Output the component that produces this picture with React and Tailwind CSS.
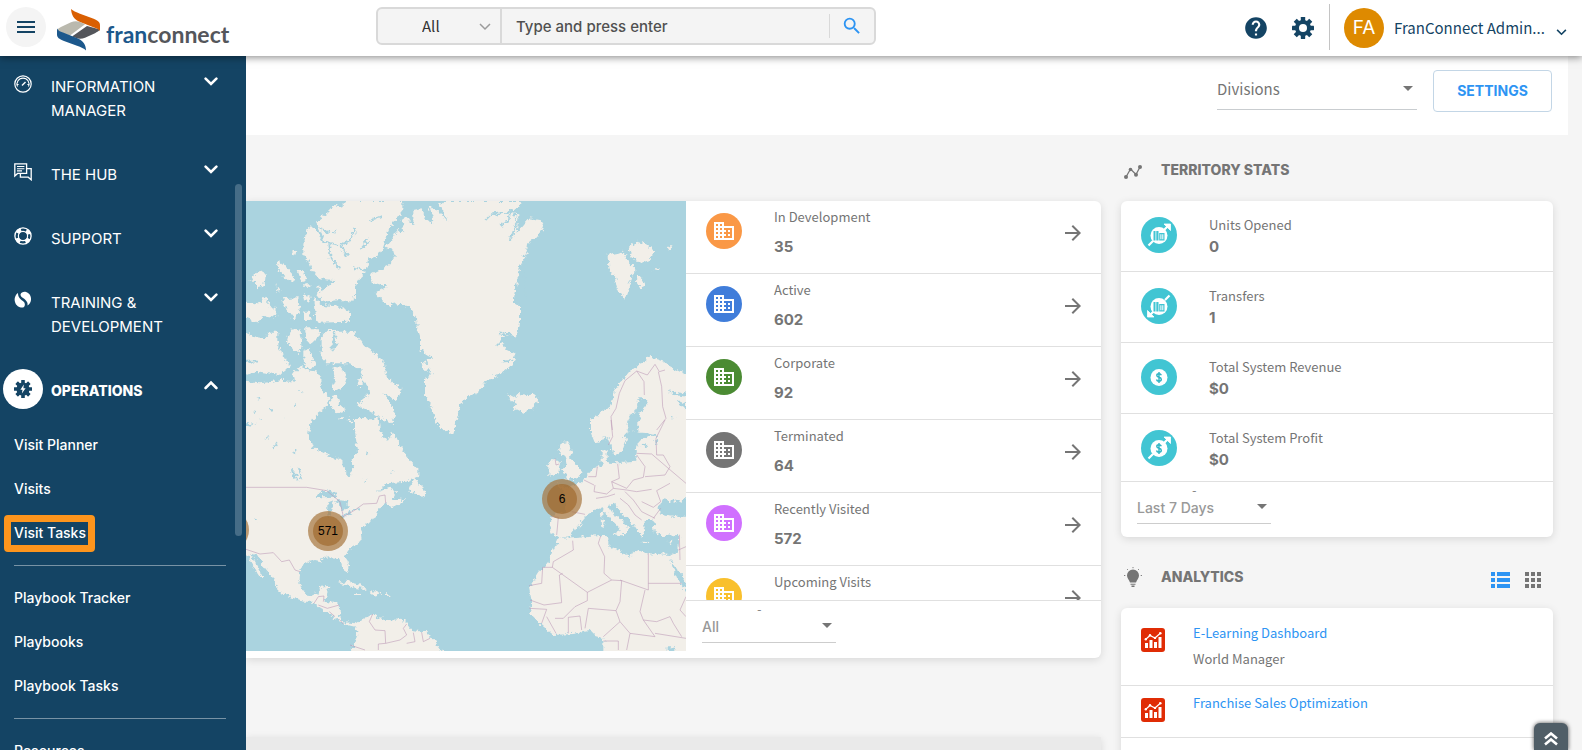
import { MdArrowForward, MdBusiness, MdHelp, MdSearch } from "react-icons/md";

const menuItems = [
  { icon: GaugeIcon, label: "INFORMATION MANAGER" },
  { icon: HubIcon, label: "THE HUB" },
  { icon: SupportIcon, label: "SUPPORT" },
  { icon: TrainingIcon, label: "TRAINING & DEVELOPMENT" },
];

const operationGroups = [
  ["Visit Planner", "Visits", "Visit Tasks"],
  ["Playbook Tracker", "Playbooks", "Playbook Tasks"],
  ["Resources"],
];

const locations = [
  { label: "In Development", value: "35", color: "bg-[#fa9846]" },
  { label: "Active", value: "602", color: "bg-[#407dda]" },
  { label: "Corporate", value: "92", color: "bg-[#4b8b33]" },
  { label: "Terminated", value: "64", color: "bg-[#757575]" },
  { label: "Recently Visited", value: "572", color: "bg-[#d070ff]" },
  { label: "Upcoming Visits", value: null, color: "bg-[#f9c02d]" },
];

const stats = [
  { label: "Units Opened", value: "0", glyph: "building", arrow: "up" },
  { label: "Transfers", value: "1", glyph: "building", arrow: "down" },
  { label: "Total System Revenue", value: "$0", glyph: "dollar", arrow: null },
  { label: "Total System Profit", value: "$0", glyph: "dollar", arrow: "up" },
];

/* ---------- icons ---------- */

function GaugeIcon() {
  return (
    <svg viewBox="0 0 18 18" className="h-[18px] w-[18px]" fill="none" stroke="currentColor">
      <circle cx="9" cy="9" r="8.2" strokeWidth="1.2" />
      <path d="M3.5 11.5A6 6 0 1 1 14.5 11.5M2.6 9.5h2M13.4 9.5h2" strokeWidth="1.1" />
      <path d="M8 10.5 11.5 7" strokeWidth="1.4" />
    </svg>
  );
}

function HubIcon() {
  return (
    <svg viewBox="0 0 18 18" className="h-[18px] w-[18px]" fill="none" stroke="currentColor" strokeWidth="1.3">
      <path d="M.8.8h11.8v9.6H3.6L.8 13z" />
      <path d="M3 3.5h7.4M3 5.7h7.4M3 7.9h5" strokeWidth="1.1" />
      <path d="M12.6 5.6h4.6v11.2l-3-2.6H6.4v-3.8" />
    </svg>
  );
}

function SupportIcon() {
  return (
    <svg viewBox="0 0 18 18" className="h-[18px] w-[18px]" fill="none" stroke="currentColor">
      <circle cx="9" cy="9" r="8.1" strokeWidth="1.3" />
      <circle cx="9" cy="9" r="4.6" strokeWidth="1.2" />
      <circle cx="9" cy="9" r="6.4" strokeWidth="4" strokeDasharray="4.6 5.453" strokeDashoffset="-2.7" />
    </svg>
  );
}

function TrainingIcon() {
  return (
    <svg viewBox="0 0 18 18" className="h-[18px] w-[18px]" fill="currentColor">
      <path d="M4 2C1 4 0 8 1 11c1 4 5 6 8 5.500 2-.5 2.500-3.500 1-5.500C8.500 9.500 7 9 5.500 7 4.300 5.200 4 4 4 2z" />
      <path d="M6.500 3.500C7 1.500 9.500.500 12 1c3.500 1 5.500 4.500 5 8-.3 2.500-1.500 4.500-3.500 5.500.5-2.500-.5-4-2.500-6s-4.500-2.500-4.500-5z" />
    </svg>
  );
}

function Gear({ className, children }) {
  return (
    <svg viewBox="0 0 22 22" className={className} fill="currentColor">
      {[0, 45, 90, 135].map((angle) => (
        <rect key={angle} x="8.800" y="0" width="4.400" height="22" rx=".4" transform={`rotate(${angle} 11 11)`} />
      ))}
      <circle cx="11" cy="11" r="8" />
      {children}
    </svg>
  );
}

function Chevron({ className, up }) {
  return (
    <svg viewBox="0 0 14 12" className={className} fill="none" stroke="currentColor" strokeWidth="2.600" strokeLinecap="round">
      <path d={up ? "M1.600 9 7 3.600 12.400 9" : "M1.600 3.600 7 9l5.400-5.400"} />
    </svg>
  );
}

function Caret() {
  return (
    <svg viewBox="0 0 10 5" className="pointer-events-none absolute top-1/2 right-1 h-[5px] w-[10px] -translate-y-1" fill="#757575">
      <path d="M0 0h10L5 5z" />
    </svg>
  );
}

function Logo() {
  return (
    <a href="#home" aria-label="franconnect" className="ml-[11px] flex items-center">
      <svg viewBox="0 0 43 42" className="h-[42px] w-[43px]">
        <path d="M0 21c1-1.500 3-2.500 6-4l8-3.700c3-1.400 6-1.500 9-.3l5 2.200L13 26.500c-2 .5-4 0-6-1z" fill="#bab9ae" />
        <path d="M43 20.500c-1 1.500-3 2.500-5 3.700L28 28.800c-3 1.300-6 1.400-9 .3l-4-1.700L30 17z" fill="#54565b" />
        <path d="M14 0c2 2 5 3.200 9 4.700L36 9.500c5 2 7 3.500 7 6.500v6c-1-1.500-3-2.500-6-3.500L22 12.500C16.500 10 14.500 5.500 14 0z" fill="#d95f02" />
        <path d="M29 41.500c-2-2-5-3.200-9-4.700L7 32c-5-2-7-3.500-7-6.500v-6c1 2 3 3 6 4l15 6c5.500 2.500 8 6.500 8 12z" fill="#1c588c" />
      </svg>
      <span className="mt-2 ml-[6px] font-['Lato',sans-serif] text-[23px] leading-8 font-bold text-[#54565b]">
        <span className="text-[#1c588c]">fran</span>connect
      </span>
    </a>
  );
}

function StatIcon({ glyph, arrow }) {
  return (
    <svg viewBox="0 0 36 36" className="h-9 w-9 shrink-0">
      <circle cx="18" cy="18" r="18" fill="#41c5d3" />
      {arrow && (
        <g transform={arrow === "down" ? "rotate(180 18 18)" : undefined} stroke="#fff" fill="none">
          <path d="M7.500 28.500 12 24M22 14l6-6" strokeWidth="2.200" />
          <path d="M23 7h6.500v6.500z" fill="#fff" strokeWidth=".8" />
        </g>
      )}
      <circle cx="18" cy="18.500" r="8.500" fill="#fff" />
      {glyph === "dollar" ? (
        <path d="M20.300 16.200c-.4-1.100-1.300-1.500-2.300-1.500-1.300 0-2.200.7-2.200 1.700 0 2.500 4.500 1.200 4.500 3.900 0 1.200-1 1.900-2.300 1.900-1.200 0-2.200-.6-2.500-1.700M18 13v11" fill="none" stroke="#2cb4c4" strokeWidth="1.400" />
      ) : (
        <g fill="#41c5d3">
          <path d="M12.500 14h2v9.500h-2zM15.300 14h2.200v9.500h-2.200z" />
          <path d="M18.200 16h5.300v7.500h-5.300zM19.400 17.300v4.900h1v-4.900zm1.900 0v4.900h1v-4.900z" fillRule="evenodd" />
        </g>
      )}
    </svg>
  );
}

function ReportIcon() {
  return (
    <svg viewBox="0 0 24 24" className="h-6 w-6 shrink-0">
      <rect width="24" height="24" rx="3" fill="#e02c05" />
      <path d="M4 15h3v5H4zM8.500 12h3v8h-3zM13 14h3v6h-3zM17.500 9h3v11h-3z" fill="#fff" />
      <path d="m4.500 11.500 4.500-4 5 2.500 5.300-4.700" fill="none" stroke="#fff" strokeWidth="1.200" />
      <g fill="#fff">
        <circle cx="4.800" cy="11.200" r="1.200" />
        <circle cx="9" cy="7.300" r="1.200" />
        <circle cx="14" cy="9.900" r="1.200" />
        <circle cx="19.300" cy="5.300" r="1.300" />
      </g>
    </svg>
  );
}

/* ---------- map ---------- */

const northLand = [
  "M320 33H490V60L455 105 440 140 430 170 410 200 385 205 375 250 355 270 345 290 345 320 335 335 300 330 250 335 230 310 265 290 280 270 235 265 215 240 205 215 190 195 190 160 200 120 215 110 235 130 255 160 245 130 228 95 260 70 285 45 305 50z",
  "M220 325 245 345 300 350 330 365 330 395 235 398 225 380z",
  "M245 440 265 420 285 420 275 450 275 490 290 470 285 425 340 425 360 450 375 470 400 490 430 510 435 540 440 560 485 600 470 635 450 620 430 610 465 660 455 700 420 680 385 660 350 645 380 620 390 600 370 570 360 540 330 520 290 520 260 520 245 500z",
  "M140 455 150 420 180 415 188 470 175 490 160 480z",
  "M195 415 240 415 235 440 215 460 200 455z",
  "M190 480 210 475 225 530 200 535 190 510z",
  "M110 215 130 220 145 240 165 260 155 278 135 260 115 240z",
  "M172 240 195 245 200 270 185 275z",
  "M190 283H214V293H190z",
  "M232 290 245 290 243 303 234 303z",
  "M157 178 168 184 167 194 158 190z",
  "M108 282 122 300 116 306z",
  "M45 250 75 243 70 290 50 295 45 275 30 275z",
  "M10 330 50 345 75 320 90 350 110 355 108 380 80 375 45 400 10 375z",
  "M125 325 175 322 180 370 160 385 135 350z",
  "M185 312 215 320 210 335 190 330z",
  "M190 365 210 365 212 390 195 390z",
  "M10 425 45 440 75 445 85 425 115 425 115 470 150 530 120 555 60 545 10 555z",
  "M10 575 60 580 130 570 165 575 160 550 180 530 200 540 235 545 245 570 240 590 265 620 260 650 235 670 215 690 205 725 10 725z",
  "M280 530 310 535 318 570 310 590 290 600 275 600 285 570z",
  "M270 620 290 615 300 645 320 660 290 670 272 650z",
  "M295 682H312V690H297zM328 680 334 696 326 698z",
  "M352 568 368 566 368 588 355 588z",
  "M345 685 375 685 400 695 415 725 345 725z",
  "M665 33H840L835 50 800 65 835 70 835 85 830 130 870 85 900 90 912 110 890 140 865 160 860 190 840 230 830 280 822 320 822 340 840 350 840 400 830 440 800 430 780 450 800 480 822 490 828 515 790 545 740 572 715 605 670 628 655 665 650 690 637 732 610 720 590 695 570 645 555 610 555 565 575 555 560 510 580 505 540 480 540 440 530 410 528 380 510 355 480 338 440 348 405 310 440 290 395 275 390 255 450 225 465 200 460 180 437 170 460 140 475 120 490 130 485 90 500 80 520 105 520 60 545 55 555 85 575 100 580 90 565 50 600 65 625 95 600 45 610 33z",
  "M544 515 565 520 568 538 550 540z",
  "M805 610 825 625 835 612 870 615 885 608 895 635 880 655 850 668 820 655 830 640 810 630z",
  "M1103 195 1150 185 1165 215 1190 240 1175 255 1165 300 1155 328 1130 295 1125 260 1105 235z",
  "M1165 175 1190 155 1225 165 1243 185 1230 210 1205 218 1175 200z",
  "M1190 250 1215 280 1205 300 1188 275z",
  "M1280 175 1293 168 1296 175 1285 180zM1237 240 1262 234 1260 240z",
  "M1053 725 1053 690 1080 670 1110 650 1130 590 1150 570 1175 540 1210 515 1230 500 1275 515 1290 530 1350 560V725z",
];

const northWater = [
  "M1160 725 1165 690 1190 655 1195 625 1225 625 1220 645 1200 670 1195 725z",
  "M1280 598 1300 605 1350 612 1350 622 1305 615z",
  "M1308 628 1335 640 1335 655 1320 648z",
  "M1295 680 1315 690 1312 710 1300 700z",
  "M50 622 62 626 56 632zM85 655 96 658 92 666zM128 690 140 684 138 694zM180 600 190 604 184 610zM40 660 50 668 42 672zM162 640 172 648 164 652z",
];

const northInlets = [
  "M235 128 250 155 300 165 330 152 352 108",
  "M268 165 272 205 298 238M300 165 322 200M245 122 290 128",
  "M388 93 424 78M360 180 385 150M340 232 375 240",
  "M735 92 755 72 810 68 805 95 780 106M825 70 830 100 812 150",
  "M850 195 858 230 850 290 858 320",
  "M770 470 800 440M785 515 820 512M780 430 815 440",
  "M18 515 55 515M30 572 80 575 135 562M20 710 65 682",
];

const southLand = [
  "M0-5H205V40L220 85 250 100 290 115 310 120 312 150 330 170 340 140 335 115 355 100 350 70 345 30 345-5H415L420 30 440 65 458 35 480 80 505 115 535 150 535 170 500 185 440 190 415 215 450 203 468 210 455 240 495 235 480 250 450 265 440 250 415 265 410 290 385 305 370 320 360 340 362 365 330 385 315 405 325 435 325 460 310 450 300 415 270 412 240 415 250 425 225 420 190 430 180 455 178 490 200 525 235 520 240 500 268 497 260 525 250 545 295 550 300 560 297 590 310 607 350 610 365 600 400 580 410 595 490 600 515 630 560 637 585 665 600 690 640 710H320L345 680 352 640 345 620 310 612 285 595 250 570 220 545 190 545 150 530 115 510 105 485 70 440 50 405 30 400 50 435 75 480 55 465 30 420 18 405 0 400z",
  "M505 215 525 170 535 190 560 215 555 230 530 222z",
  "M290 490 320 482 350 490 378 507 350 505 320 495z",
  "M385 515 408 514 425 521 400 528z",
  "M345 523H360V528H345zM438 523H451V528H438z",
  "M585-5H652L640 40 620 35 600 20z",
  "M962 70 990 65 985 80 995 95 990 115 1010 135 1025 155 1015 175 965 180 985 165 965 150 980 135 975 110 955 100z",
  "M925 130 945 115 960 125 955 160 925 168z",
  "M1053-5 1053 40 1065 70 1085 65 1100 45 1115 80 1120 105 1145 100 1158 60 1150 30 1160-5z",
  "M1195-5V30L1240 42 1205 60 1192 75 1190 95 1185 125 1130 130 1110 128 1100 115 1100 85 1085 92 1085 125 1090 135 1060 145 1035 175 1010 195 985 205 950 190 975 220 975 275 935 285 930 340 955 347 955 360 935 400 925 430 895 455 867 500 875 540 870 580 905 615 940 645 1000 642 1050 632 1065 648 1090 655 1090 705H1350V-5z",
];

const southWater = [
  "M958 353 990 347 1010 320 1040 285 1065 270 1085 262 1095 275 1115 300 1140 325 1135 345 1155 345 1165 320 1125 285 1105 255 1125 250 1140 275 1170 300 1190 330 1205 350 1215 330 1210 300 1240 300 1245 340 1270 348 1318 345 1310 400 1290 405 1225 400 1185 390 1170 410 1145 395 1105 380 1105 350 1080 345 1000 352z",
  "M1255 265 1270 235 1305 245 1350 230V290L1300 290 1262 285z",
  "M1290 415 1350 505V530L1308 470z",
  "M225 230 250 210 285 216 290 230 245 232z",
  "M262 290 262 250 280 243 275 290z",
  "M285 240 325 243 322 260 308 278 300 255z",
  "M300 291 330 275 334 280 305 295zM335 270 360 264 358 270 338 274z",
  "M150 142 165 160 178 185 160 170zM170 138 180 150 188 182 176 165z",
  "M70 55 90 48 85 56zM95 78 110 70 104 82zM10 15 50 8 30 20z",
  "M160 95 170 90 168 100zM380 95 388 102 380 106zM455 150 464 154 456 158zM370 180 380 176 376 186zM46 294 54 298 48 304z",
  "M1195 42 1250 44 1250 50 1200 52z",
  "M1210 68 1222 75 1218 85 1205 78zM1245 55 1255 65 1248 75z",
  "M1280 682H1303V693H1280z",
];

const southIslands = [
  "M1082 278 1090 276 1090 292 1084 292zM1082 298 1094 297 1092 320 1084 318z",
  "M1118 338 1148 336 1146 346 1128 344zM1205 365 1228 366 1226 370 1206 369z",
  "M1282 366 1298 362 1292 370zM1010 318 1025 312 1022 319z",
];

const borders = [
  "M18 202H200L260 212 300 245 310 290 345 270 370 252 410 250 418 228 435 225 437 250",
  "M18 388 60 402 100 398 125 425 148 420 165 450 180 455",
  "M222 550 235 530 252 528 250 545M235 555 262 565 298 555M268 575 285 590M298 598 310 612",
  "M398 582 388 605 405 630 435 632 437 670 415 672 415 690M437 670 480 660 500 645 490 625 500 612M520 638 525 665 500 670M545 637 550 665 570 655M330 675 375 690",
  "M945 115 948 135 957 132M935 290 955 292 950 345M995 275 1035 283",
  "M1032 180 1062 195M1045 170 1068 170 1072 140M1065 195 1062 215 1100 222 1120 205 1115 185 1138 175 1133 132M1068 235 1100 230 1125 222M1115 185 1160 205 1180 180 1210 172M1210 172 1215 140 1190 105M1120 205 1160 210 1190 215 1235 208M1140 235 1165 255 1185 285 1205 300M1155 215 1180 240 1205 275 1245 295M1205 245 1240 262 1262 245 1250 212 1290 190M1190 100 1235 102 1285 145 1338 190M1215 170 1275 165 1290 140 1270 105 1250 105 1248 55 1275 0M1113 0 1118 50 1105 75M1262 265 1240 295M1318 345 1320 420M1338 380 1315 390",
  "M998 362 1000 390 940 425 937 442 1042 517 1115 480 1092 460 1094 410 1075 370 1082 348M937 442H908L905 490 867 497M968 460 958 465 965 548 912 555 870 540M1225 400V490H1325M1225 490V510L1140 480M1115 480 1145 482 1140 545 1128 572 1045 565 1035 625M1042 517V542L1005 560 970 595 945 595M1215 510 1200 575 1210 600 1250 605 1290 590 1300 610M868 565 920 568 905 610M920 590 948 640M985 640V592L1020 588 1025 630M1128 572 1140 605 1090 650M1140 605 1170 640 1245 650 1210 600M1090 663H1135V690M1170 640 1160 690M1245 640 1338 655M1300 610 1325 650M1338 530 1320 570 1338 590",
];

function WorldMap() {
  return (
    <svg viewBox="0 0 1320 1350" preserveAspectRatio="xMinYMin slice" className="h-full w-full bg-[#aad3df]" role="img" aria-label="Map of locations">
      <defs>
        {/* roughens the coastlines */}
        <filter id="coast" x="0" y="0" width="100%" height="100%">
          <feTurbulence type="fractalNoise" baseFrequency="0.08" numOctaves="3" seed="4" result="noise" />
          <feDisplacementMap in="SourceGraphic" in2="noise" scale="21" xChannelSelector="R" yChannelSelector="G" />
        </filter>
      </defs>
      <g filter="url(#coast)">
        <rect x="-40" y="-40" width="1400" height="1430" fill="#aad3df" />
        <g transform="translate(-18 -33)">
          <path d={northLand.join("")} fill="#f2efe9" />
          <path d={northWater.join("")} fill="#aad3df" />
          <path d={northInlets.join("")} fill="none" stroke="#aad3df" strokeWidth="5" />
        </g>
        <g transform="translate(-18 657)">
          <path d={southLand.join("")} fill="#f2efe9" />
          <path d={southWater.join("")} fill="#aad3df" />
          <path d={southIslands.join("")} fill="#f2efe9" />
        </g>
      </g>
      <g fill="none" stroke="#b893b4" strokeOpacity=".65" strokeWidth="2.500">
        <path d="M1117 720 1113 680 1128 655 1138 610 1155 572 1190 543 1222 555 1245 523 1258 545 1275 540M1190 543 1212 575 1213 615M1255 545 1265 590 1268 650 1278 685 1250 720" transform="translate(-18 -33)" />
        <path d={borders.join("")} transform="translate(-18 657)" />
      </g>
    </svg>
  );
}

function Cluster({ count, className }) {
  return (
    <button className={`absolute flex h-10 w-10 items-center justify-center rounded-full bg-[#a8773fb5] ${className}`}>
      <span className="flex h-[30px] w-[30px] items-center justify-center rounded-full bg-[#a06a2fb0] font-['Liberation_Sans',sans-serif] text-xs text-black">
        {count}
      </span>
    </button>
  );
}

/* ---------- layout ---------- */

function Header() {
  return (
    <header className="relative z-30 flex h-14 shrink-0 items-center bg-white shadow-[0_1px_8px_rgba(0,0,0,0.5)]">
      <button aria-label="Menu" className="mb-[2px] ml-[6px] flex h-10 w-10 shrink-0 flex-col items-center justify-center gap-[3px] rounded-full bg-[#f4f4f4]">
        <span className="h-[2px] w-[18px] bg-[#144464]" />
        <span className="h-[2px] w-[18px] bg-[#144464]" />
        <span className="h-[2px] w-[18px] bg-[#144464]" />
      </button>
      <div className="w-[330px] shrink-0 pt-1">
        <Logo />
      </div>
      <form className="mb-1 flex h-[38px] w-[500px] items-center rounded-md border-2 border-[#d9d9d9] bg-[#f4f4f4] font-['Noto_Sans_CJK_SC',sans-serif]">
        <div className="relative h-full w-[124px] border-r-2 border-[#d9d9d9]">
          <select aria-label="Search in" className="h-full w-full appearance-none bg-transparent pl-11 text-[15px] text-[#333]">
            <option>All</option>
          </select>
          <svg viewBox="0 0 12 8" className="pointer-events-none absolute top-[14px] right-[9px] h-2 w-3" fill="none" stroke="#9b9b9b" strokeWidth="1.500">
            <path d="m1 1 5 5 5-5" />
          </svg>
        </div>
        <input
          type="text"
          aria-label="Search"
          placeholder="Type and press enter"
          className="h-full min-w-0 flex-1 bg-transparent pl-[14px] font-['Inter',sans-serif] text-[15px] font-medium placeholder:text-[#505050]"
        />
        <button type="button" aria-label="Run search" className="flex h-6 w-[45px] items-center justify-center border-l border-[#d9d9d9]">
          <MdSearch className="h-[22px] w-[22px] text-[#2d94f3]" />
        </button>
      </form>
      <div className="ml-auto flex h-full items-center text-[#144464]">
        <button aria-label="Help" className="mr-[23px]">
          <MdHelp className="h-[26px] w-[26px]" />
        </button>
        <button aria-label="Settings" className="mr-[15px]">
          <Gear className="h-[22px] w-[22px]">
            <circle cx="11" cy="11" r="4" fill="#fff" />
          </Gear>
        </button>
        <span className="mr-[14px] mb-[2px] h-[46px] w-px bg-[#c4c4c4]" />
        <button className="flex items-center pr-[15px]">
          <span className="mr-[10px] flex h-10 w-10 items-center justify-center rounded-full bg-[#de8a00] font-['Inter',sans-serif] text-[19px] text-white">
            FA
          </span>
          <span className="mr-[10px] w-[152px] text-left font-['Noto_Sans_CJK_SC',sans-serif] text-[15px] whitespace-nowrap">
            FranConnect Admin...
          </span>
          <svg viewBox="0 0 12 8" className="mt-2 h-[7px] w-[11px]" fill="none" stroke="currentColor" strokeWidth="1.800">
            <path d="m1 1 5 5 5-5" />
          </svg>
        </button>
      </div>
    </header>
  );
}

function Sidebar() {
  return (
    <aside className="relative w-[246px] shrink-0 overflow-hidden bg-[#144464] font-['Inter',sans-serif] text-[15px] text-white">
      <nav className="flex flex-col gap-10 pt-[19px]">
        {menuItems.map((item) => (
          <button key={item.label} className="flex items-start pr-7 pl-[14px] text-left leading-6">
            <item.icon />
            <span className="ml-[19px] w-[120px]">{item.label}</span>
            <Chevron className="ml-auto h-3 w-[14px]" />
          </button>
        ))}
        <div>
          <button className="flex h-6 w-full items-start pr-7 pl-[3px] text-left">
            <span className="-my-[10px] flex h-10 w-10 items-center justify-center rounded-full bg-white text-[#144464]">
              <Gear className="h-[18px] w-[18px]">
                <path d="M12 5.500 7.800 12h2.600l-.8 4.500 4.600-6.500h-2.700z" fill="#fff" />
              </Gear>
            </span>
            <span className="ml-2 text-sm/6 font-extrabold">OPERATIONS</span>
            <Chevron up className="ml-auto h-3 w-[14px]" />
          </button>
          <div className="mt-5 pr-5 pl-[14px] text-sm font-medium">
            {operationGroups.map((group, i) => (
              <div key={i} className={i > 0 ? "mt-[10px] border-t border-[#7893a5] pt-[10px]" : ""}>
                {group.map((label) => (
                  <a key={label} href="#operations" className="relative flex h-11 items-center">
                    {label}
                    {label === "Visit Tasks" && (
                      <span className="absolute top-1 -left-[10px] h-[37px] w-[91px] rounded-sm border-[7px] border-[#fd951d]" />
                    )}
                  </a>
                ))}
              </div>
            ))}
          </div>
        </div>
      </nav>
      <span className="absolute top-32 right-1 h-[352px] w-[7px] rounded-full bg-[#466d87]" />
    </aside>
  );
}

function Toolbar() {
  return (
    <div className="mr-[14px] flex h-[79px] items-start justify-end gap-4 bg-white pt-[14px] pr-4">
      <div className="relative w-[200px] border-b border-[#c9cdd0]">
        <select aria-label="Divisions" className="h-[39px] w-full appearance-none bg-transparent font-['Noto_Sans_CJK_SC',sans-serif] text-[15px] text-[#757575]">
          <option>Divisions</option>
        </select>
        <Caret />
      </div>
      <button className="h-[42px] w-[119px] rounded border border-[#c3d6e6] font-['Inter',sans-serif] text-sm font-bold text-[#2d94f3]">
        SETTINGS
      </button>
    </div>
  );
}

function FooterSelect({ label, value }) {
  return (
    <div className="relative ml-4 w-[134px] border-b border-[#cdcdcd]">
      <span className="absolute -top-2 left-[55px] text-[10px] leading-3 text-[#757575]">-</span>
      <select aria-label={label} className="h-[30px] w-full appearance-none bg-transparent font-['Inter',sans-serif] text-sm font-medium text-[#999]">
        <option>{value}</option>
      </select>
      <Caret />
    </div>
  );
}

function LocationsCard() {
  return (
    <section className="flex h-[457px] rounded-r-md bg-white shadow-[0_2px_8px_rgba(0,0,0,0.12)]">
      <div className="relative h-[450px] min-w-0 flex-1 overflow-hidden">
        <WorldMap />
        <Cluster count="" className="top-[309px] -left-[37px]" />
        <Cluster count="571" className="top-[310px] left-[62px]" />
        <Cluster count="6" className="top-[278px] left-[296px]" />
      </div>
      <div className="flex w-[415px] shrink-0 flex-col">
        <ul className="h-[399px] overflow-hidden">
          {locations.map((item) => (
            <li key={item.label} className="flex h-[73px] items-start border-b border-[#e0e0e0] pr-4 pl-5">
              <span className={`mt-3 flex h-9 w-9 items-center justify-center rounded-full ${item.color}`}>
                <MdBusiness className="h-6 w-6 text-white" />
              </span>
              <span className="ml-8 pt-[6px] text-[#757575]">
                <span className="block font-['Noto_Sans_CJK_SC',sans-serif] text-[13px] leading-5">{item.label}</span>
                <span className="mt-[10px] block text-[15px] leading-5 font-bold">{item.value}</span>
              </span>
              <button aria-label={`Open ${item.label}`} className="mt-5 ml-auto">
                <MdArrowForward className="h-6 w-6 text-[#757575]" />
              </button>
            </li>
          ))}
        </ul>
        <div className="flex-1 border-t border-[#e0e0e0] pt-[11px]">
          <FooterSelect label="Location type" value="All" />
        </div>
      </div>
    </section>
  );
}

function StatsCard() {
  return (
    <section>
      <h2 className="flex h-[66px] items-center pt-1 text-sm font-extrabold text-[#757575]">
        <svg viewBox="0 0 18 14" className="mt-1 mr-[19px] ml-[3px] h-[14px] w-[18px]" fill="currentColor">
          <path d="m2 12 4.500-8L12 9.500 16 2" fill="none" stroke="currentColor" strokeWidth="1.300" />
          <circle cx="2" cy="12" r="2" />
          <circle cx="6.500" cy="4.500" r="1.800" />
          <circle cx="12" cy="9.800" r="2" />
          <circle cx="16" cy="2" r="2" />
        </svg>
        TERRITORY STATS
      </h2>
      <div className="rounded-md bg-white shadow-[0_2px_8px_rgba(0,0,0,0.12)]">
        <ul className="h-[280px] overflow-hidden">
          {stats.map((item) => (
            <li key={item.label} className="flex h-[71px] items-start border-b border-[#e0e0e0] pt-4 pl-5">
              <StatIcon glyph={item.glyph} arrow={item.arrow} />
              <span className="-mt-[2px] ml-8 text-[#757575]">
                <span className="block font-['Noto_Sans_CJK_SC',sans-serif] text-[13px] leading-5">{item.label}</span>
                <span className="block text-[15px] leading-6 font-bold">{item.value}</span>
              </span>
            </li>
          ))}
        </ul>
        <div className="h-14 border-t border-[#e0e0e0] pt-[11px]">
          <FooterSelect label="Period" value="Last 7 Days" />
        </div>
      </div>
    </section>
  );
}

function AnalyticsCard() {
  return (
    <section>
      <div className="flex h-[71px] items-center pt-2 pr-3 text-[#757575]">
        <svg viewBox="0 0 18 20" className="mr-[19px] ml-[3px] h-5 w-[18px]" fill="currentColor">
          <path d="M9 2.500a6 6 0 0 0-6 6c0 2.700 2 4 3 7h6c1-3 3-4.300 3-7a6 6 0 0 0-6-6zM6.500 16.800h5v1h-5zM7.500 18.500h3V20h-3z" />
          <path d="M9 0v1.200M3 2l.9.900M15 2l-.9.900M0 8.500h1.300M16.700 8.500H18" stroke="currentColor" strokeWidth=".9" />
        </svg>
        <h2 className="text-sm font-extrabold">ANALYTICS</h2>
        <button aria-label="List view" className="mt-[6px] ml-auto text-[#2d94f3]">
          <svg viewBox="0 0 19 16" className="h-4 w-[19px]" fill="currentColor">
            <path d="M0 0h4v4H0zM0 6h4v4H0zM0 12h4v4H0zM6 0h13v4H6zM6 6h13v4H6zM6 12h13v4H6z" />
          </svg>
        </button>
        <button aria-label="Grid view" className="mt-[6px] ml-[15px]">
          <svg viewBox="0 0 16 16" className="h-4 w-4" fill="currentColor">
            <path d="M0 0h4v4H0zM0 6h4v4H0zM0 12h4v4H0zM6 0h4v4H6zM6 6h4v4H6zM6 12h4v4H6zM12 0h4v4h-4zM12 6h4v4h-4zM12 12h4v4h-4z" />
          </svg>
        </button>
      </div>
      <ul className="rounded-md bg-white font-['Noto_Sans_CJK_SC',sans-serif] text-[13px] leading-5 text-[#757575] shadow-[0_2px_8px_rgba(0,0,0,0.12)]">
        <li className="flex h-[78px] items-start border-b border-[#e0e0e0] pt-5 pl-5">
          <ReportIcon />
          <div className="-mt-[5px] ml-7">
            <a href="#e-learning" className="block text-[#2d94f3]">E-Learning Dashboard</a>
            <span className="mt-[6px] block">World Manager</span>
          </div>
        </li>
        <li className="flex h-[52px] items-start border-b border-[#e0e0e0] pt-3 pl-5">
          <ReportIcon />
          <a href="#sales" className="-mt-[5px] ml-7 text-[#2d94f3]">Franchise Sales Optimization</a>
        </li>
        <li className="h-[52px]" />
      </ul>
    </section>
  );
}

export default function App() {
  return (
    <div className="flex h-screen flex-col overflow-hidden bg-[#f5f5f5] font-['Inter',sans-serif]">
      <Header />
      <div className="flex min-h-0 flex-1">
        <Sidebar />
        <main className="min-w-0 flex-1 overflow-hidden">
          <Toolbar />
          <div className="flex gap-5 pr-[29px]">
            <div className="min-w-0 flex-1 pt-[66px]">
              <LocationsCard />
              <div className="mt-[79px] h-16 bg-[#eaeaea] shadow-[0_2px_8px_rgba(0,0,0,0.12)]" />
            </div>
            <div className="w-[432px] shrink-0">
              <StatsCard />
              <AnalyticsCard />
            </div>
          </div>
        </main>
      </div>
      <button aria-label="Back to top" className="fixed right-[14px] bottom-0 z-20 flex h-[27px] w-[34px] items-center justify-center rounded-t-md bg-[#505e67] shadow-[0_0_4px_rgba(0,0,0,0.7)]">
        <svg viewBox="0 0 14 14" className="mt-1 h-[14px] w-[14px]" fill="none" stroke="#fff" strokeWidth="2.600">
          <path d="m1 6.500 6-5 6 5M1 12.500l6-5 6 5" />
        </svg>
      </button>
    </div>
  );
}
